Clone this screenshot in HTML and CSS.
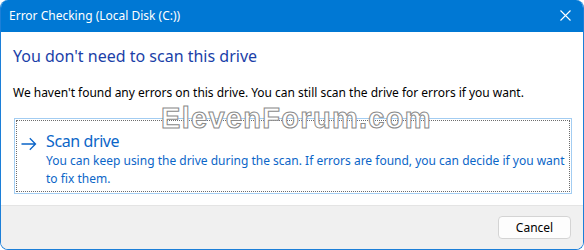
FILE: index.html
```html
<!DOCTYPE html>
<html>
<head>
<meta charset="utf-8">
<link rel="stylesheet" href="styles.css">
</head>
<body>
<div class="window">
  <div class="titlebar">
    <span class="title">Error Checking (Local Disk (C:))</span>
    <svg class="close" width="11" height="11" viewBox="0 0 11 11"><path d="M0.5 0.5 L10.5 10.5 M10.5 0.5 L0.5 10.5" stroke="#ffffff" stroke-width="1.1" fill="none"/></svg>
  </div>
  <div class="content">
    <h1 class="heading">You don't need to scan this drive</h1>
    <p class="message">We haven't found any errors on this drive. You can still scan the drive for errors if you want.</p>
    <div class="command">
      <div class="command-inner">
        <svg class="arrow" width="16" height="14" viewBox="0 0 16 14"><path d="M0.5 7 H14.5 M8.8 1.3 L14.5 7 L8.8 12.7" stroke="#0a64c8" stroke-width="1.3" fill="none"/></svg>
        <div class="command-text">
          <div class="command-title">Scan drive</div>
          <div class="command-desc">You can keep using the drive during the scan. If errors are found, you can decide if you want to fix them.</div>
        </div>
      </div>
    </div>
  </div>
  <div class="footer">
    <button class="btn">Cancel</button>
  </div>
  <div class="watermark">ElevenForum.com</div>
</div>
</body>
</html>
```
FILE: styles.css
```css
html, body {
  margin: 0;
  padding: 0;
  background: #ffffff;
}
body {
  width: 584px;
  height: 250px;
  overflow: hidden;
  font-family: "Noto Sans", sans-serif;
}
.window {
  position: relative;
  width: 584px;
  height: 250px;
  box-sizing: border-box;
  border: 1px solid #1c7fd8;
  border-top: none;
  border-radius: 8px;
  overflow: hidden;
  display: flex;
  flex-direction: column;
  background: #ffffff;
}
.titlebar {
  height: 32px;
  flex: none;
  background: #0078d4;
  color: #ffffff;
  display: flex;
  align-items: center;
  justify-content: space-between;
  padding: 0 12px 0 8px;
}
.title {
  font-size: 12px;
  letter-spacing: 0;
  margin-top: -1px;
}
.close {
  margin-top: -2px;
}
.content {
  flex: 1;
  padding: 13px 11px 0 12px;
}
.heading {
  margin: 0;
  font-weight: normal;
  font-size: 16px;
  line-height: 22px;
  color: #1b3fa8;
  letter-spacing: 0;
}
.message {
  margin: 18px 0 0 0;
  font-size: 12px;
  line-height: 16px;
  color: #000000;
  letter-spacing: -0.02px;
}
.command {
  margin-top: 17px;
  margin-left: 1px;
  border: 1px solid #a3cdf2;
  padding: 1px;
}
.command-inner {
  border: 1px dotted #6d6d6d;
  display: flex;
  align-items: flex-start;
  padding: 10px 4px 6px 4px;
  height: 54px;
}
.arrow {
  margin-top: 6px;
  margin-right: 9px;
  flex: none;
}
.command-title {
  font-size: 16px;
  line-height: 20px;
  color: #0b66c8;
  letter-spacing: -0.4px;
}
.command-desc {
  margin-top: 1px;
  font-size: 12px;
  line-height: 18px;
  color: #0b66c8;
  letter-spacing: 0;
}
.footer {
  height: 43px;
  flex: none;
  background: #f0f0f0;
  border-top: 1px solid #e4e4e4;
  display: flex;
  align-items: center;
  justify-content: flex-end;
  padding-right: 12px;
}
.btn {
  width: 73px;
  height: 23px;
  background: #fdfdfd;
  border: 1px solid #d4d4d4;
  border-radius: 4px;
  font-family: "Noto Sans", sans-serif;
  font-size: 12px;
  color: #000000;
  padding: 0;
  margin-top: -1px;
}
.watermark {
  position: absolute;
  left: 160px;
  top: 102px;
  font-family: "Liberation Sans", sans-serif;
  font-weight: bold;
  font-size: 29px;
  color: #ffffff;
  -webkit-text-stroke: 1px #8a8a8a;
  letter-spacing: 1.3px;
}
```
